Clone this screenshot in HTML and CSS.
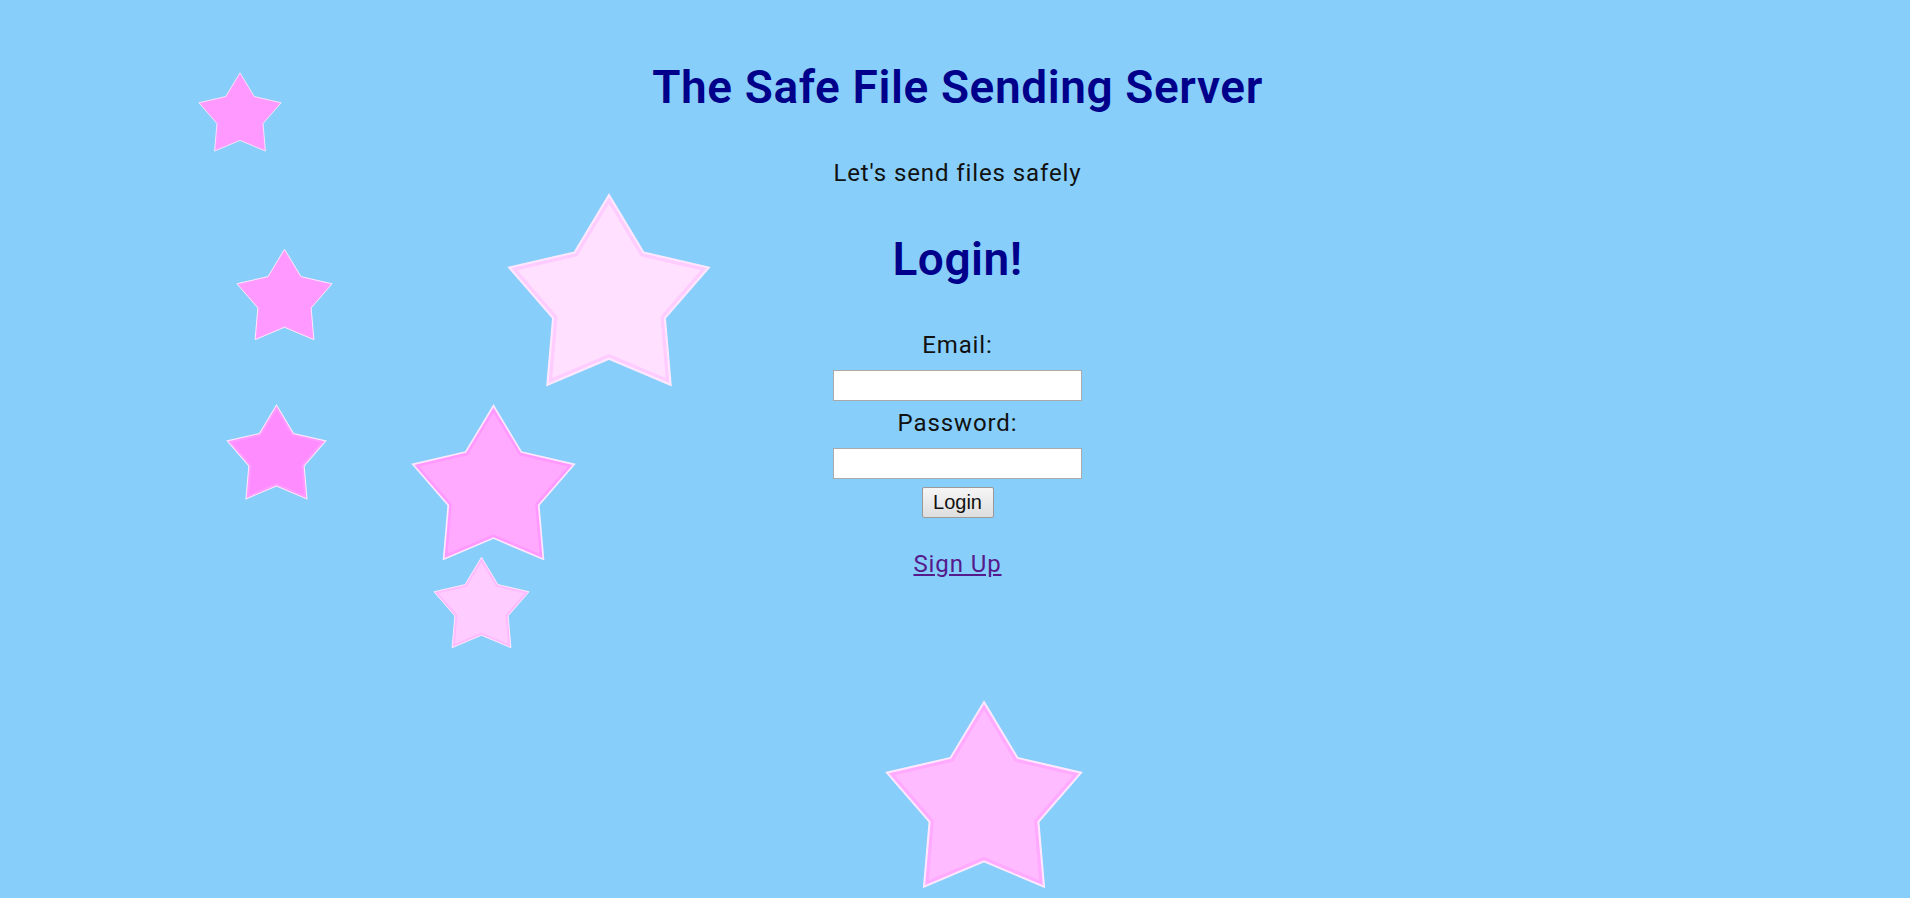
FILE: index.html
```html
<!DOCTYPE html>
<html lang="en">
<head>
  <meta charset="UTF-8">
  <meta name="viewport" content="width=device-width, initial-scale=1.0">
  <title>The Safe File Sending Server</title>
  <link rel="stylesheet" href="styles.css">
</head>
<body>
  <svg class="defs" aria-hidden="true">
    <defs>
      <path id="star-path" d="M0,-100 L32.9,-45.3 L95.1,-30.9 L53.3,17.3 L58.8,80.9 L0,56 L-58.8,80.9 L-53.3,17.3 L-95.1,-30.9 L-32.9,-45.3 Z"/>
    </defs>
  </svg>

  <div class="stars" aria-hidden="true">
    <svg class="star star-1" viewBox="-97 -102 194 185"><use href="#star-path" class="band"/><use href="#star-path" class="core" transform="scale(.9)"/></svg>
    <svg class="star star-2" viewBox="-97 -102 194 185"><use href="#star-path" class="band"/><use href="#star-path" class="core" transform="scale(.9)"/></svg>
    <svg class="star star-3" viewBox="-97 -102 194 185"><use href="#star-path" class="band"/><use href="#star-path" class="core" transform="scale(.9)"/></svg>
    <svg class="star star-4" viewBox="-97 -102 194 185"><use href="#star-path" class="band"/><use href="#star-path" class="core" transform="scale(.92)"/></svg>
    <svg class="star star-5" viewBox="-97 -102 194 185"><use href="#star-path" class="band"/><use href="#star-path" class="core" transform="scale(.92)"/></svg>
    <svg class="star star-6" viewBox="-97 -102 194 185"><use href="#star-path" class="band"/><use href="#star-path" class="core" transform="scale(.9)"/></svg>
    <svg class="star star-7" viewBox="-97 -102 194 185"><use href="#star-path" class="band"/><use href="#star-path" class="core" transform="scale(.92)"/></svg>
  </div>

  <main class="page">
    <h1 class="title">The Safe File Sending Server</h1>
    <p class="tagline">Let's send files safely</p>

    <h2 class="login-title">Login!</h2>
    <form class="login-form" action="#" method="post">
      <label for="email" class="field-label">Email:</label>
      <input type="text" id="email" name="email" class="field-input">
      <label for="password" class="field-label field-label-pw">Password:</label>
      <input type="password" id="password" name="password" class="field-input">
      <button type="submit" class="login-btn">Login</button>
    </form>

    <a href="#" class="signup-link">Sign Up</a>
  </main>
</body>
</html>
```

FILE: styles.css
```css
* { box-sizing: border-box; }
html, body { height: 100%; }
body { margin: 0; background-color: #87cefa; color: #111; font-family: Roboto, "Liberation Sans", sans-serif; overflow: hidden; position: relative; }

.defs { position: absolute; width: 0; height: 0; }

/* decorative stars scattered over the background */
.stars { position: absolute; inset: 0; pointer-events: none; }
.star { position: absolute; overflow: visible; }
.star .band { fill: var(--band); stroke: #ffe8ff; stroke-width: 2; stroke-linejoin: miter; }
.star .core { fill: var(--core); }
.star-1 { left: 198px; top: 72px; width: 84px; height: 80px; --band: #ff9aff; --core: #ff99ff; }
.star-2 { left: 236px; top: 248px; width: 97px; height: 93px; --band: #ff9aff; --core: #ff99ff; }
.star-3 { left: 226px; top: 404px; width: 101px; height: 96px; --band: #ff99ff; --core: #ff8cff; }
.star-4 { left: 507px; top: 193px; width: 204px; height: 194px; --band: #ffccff; --core: #ffe0ff; }
.star-5 { left: 411px; top: 404px; width: 165px; height: 157px; --band: #ff99ff; --core: #ffaaff; }
.star-6 { left: 433px; top: 556px; width: 97px; height: 93px; --band: #ffbbff; --core: #ffccff; }
.star-7 { left: 885px; top: 700px; width: 198px; height: 189px; --band: #ffaaff; --core: #ffbbff; }

.page { position: relative; display: flex; flex-direction: column; align-items: center; text-align: center; padding: 60px 0 0 5px; }

.title { margin: 0; font-size: 46px; line-height: 54px; font-weight: 600; letter-spacing: 0.6px; color: #00008b; }
.tagline { margin: 44px 0 0; font-size: 24px; line-height: 30px; letter-spacing: 0.9px; }
.login-title { margin: 44px 0 0; font-size: 46px; line-height: 54px; font-weight: 600; letter-spacing: 0.5px; color: #00008b; }

.login-form { display: flex; flex-direction: column; align-items: center; margin-top: 44px; }
.field-label { font-size: 24px; line-height: 30px; letter-spacing: 0.9px; margin-bottom: 10px; }
.field-label-pw { margin-top: 7px; }
.field-input { width: 249px; height: 31px; border: 1px solid #aaa; background: #fff; font-size: 20px; padding: 2px 4px; }
.login-btn { margin-top: 8px; width: 72px; height: 31px; padding: 0; font-family: "Liberation Sans", Arial, sans-serif; font-size: 20px; color: #111; background: linear-gradient(#f6f6f6, #dedede); border: 1px solid #999; border-radius: 2px; cursor: pointer; }

.signup-link { margin-top: 31px; font-size: 24px; line-height: 30px; letter-spacing: 0.9px; color: #551a8b; text-decoration: underline; }
```
